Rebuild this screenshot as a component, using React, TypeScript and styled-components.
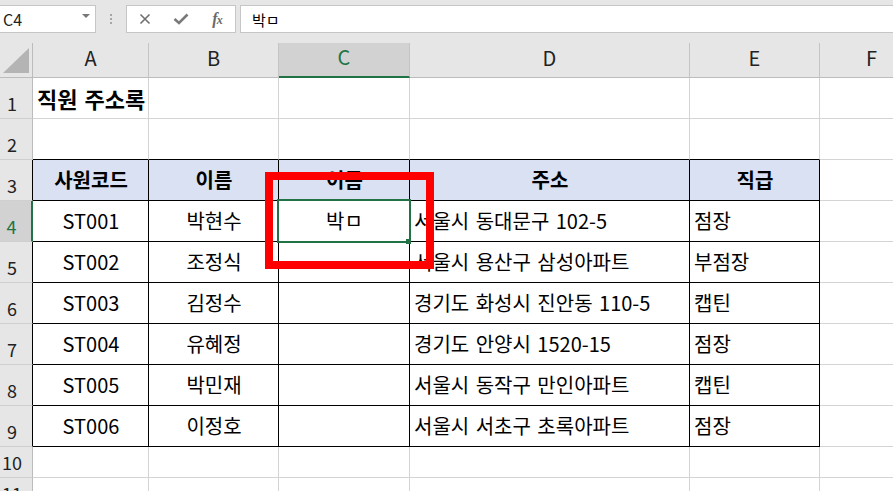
import React from 'react';
import styled, { createGlobalStyle, css } from 'styled-components';

const GlobalStyle = createGlobalStyle`
  html, body { margin: 0; padding: 0; background: #fff; }
  body { font-family: "Noto Sans CJK KR", "Noto Sans", sans-serif; overflow: hidden; }
`;

const Page = styled.div`
  position: relative;
  width: 893px;
  height: 491px;
  overflow: hidden;
  background: #fff;
`;

const TopBar = styled.div`
  height: 43px;
  box-sizing: border-box;
  padding-top: 5px;
  background: #e6e6e6;
  display: flex;
  align-items: flex-start;
`;

const NameBox = styled.div`
  width: 97px;
  height: 28px;
  margin-left: -1px;
  box-sizing: border-box;
  background: #fff;
  border: 1px solid #c6c6c6;
  display: flex;
  align-items: center;
  justify-content: space-between;
  padding: 0 5px 0 3px;
  font-size: 16px;
  color: #222;
`;

const DropArrow = styled.span`
  width: 0;
  height: 0;
  border-left: 4px solid transparent;
  border-right: 4px solid transparent;
  border-top: 4px solid #777;
  margin-top: -6px;
`;

const Dots = styled.div`
  margin: 9px 0 0 14px;
  display: flex;
  flex-direction: column;
  gap: 2px;
`;

const Dot = styled.span`
  width: 2px;
  height: 2px;
  background: #a6a6a6;
`;

const ButtonGroup = styled.div`
  margin-left: 14px;
  width: 110px;
  height: 28px;
  box-sizing: border-box;
  background: #fff;
  border: 1px solid #c6c6c6;
  display: flex;
  align-items: center;
`;

const IconSlot = styled.div`
  width: 36px;
  height: 100%;
  display: flex;
  align-items: center;
  justify-content: center;
`;

const Fx = styled.span`
  font-family: "Liberation Serif", "DejaVu Serif", serif;
  font-style: italic;
  font-weight: bold;
  font-size: 16px;
  color: #6a6a6a;
  letter-spacing: -1px;
`;

const FxSub = styled.span`
  font-size: 12px;
`;

const FormulaInput = styled.div`
  margin-left: 4px;
  margin-right: -2px;
  flex: 1;
  height: 28px;
  box-sizing: border-box;
  background: #fff;
  border: 1px solid #c6c6c6;
  padding-left: 11px;
  display: flex;
  align-items: center;
  font-size: 15px;
  color: #000;
`;

const Grid = styled.div`
  display: grid;
  grid-template-columns: 33px 116px 130px 131px 280px 130px 104px 100px;
  grid-template-rows: 35px repeat(9, 41px) 31px 31px;
`;

const Corner = styled.div`
  background: #e6e6e6;
  border-right: 1px solid #bcbcbc;
  border-bottom: 1px solid #bcbcbc;
  box-sizing: border-box;
  display: flex;
`;

const ColHeader = styled.div<{ $selected?: boolean }>`
  background: #e6e6e6;
  border-right: 1px solid #c4c4c4;
  border-bottom: 1px solid #bcbcbc;
  box-sizing: border-box;
  display: flex;
  align-items: center;
  justify-content: center;
  padding-bottom: 6px;
  font-size: 20px;
  color: #222;
  ${(p) =>
    p.$selected &&
    css`
      background: #d2d2d2;
      color: #217346;
      border-bottom: 2px solid #217346;
    `}
`;

const RowHeader = styled.div<{ $selected?: boolean; $edge?: boolean }>`
  background: #e6e6e6;
  border-right: 1px solid ${(p) => (p.$edge ? '#000' : '#bcbcbc')};
  border-bottom: 1px solid #cfcfcf;
  box-sizing: border-box;
  display: flex;
  align-items: flex-end;
  justify-content: center;
  padding: 0 8px 3px 0;
  font-size: 18px;
  line-height: 24px;
  color: #222;
  ${(p) =>
    p.$selected &&
    css`
      background: #d2d2d2;
      color: #217346;
      border-right: 2px solid #217346;
    `}
`;

const Cell = styled.div<{
  $align?: 'center' | 'left';
  $bold?: boolean;
  $size?: number;
  $fill?: string;
  $rb?: boolean;
  $bb?: boolean;
}>`
  box-sizing: border-box;
  border-right: 1px solid ${(p) => (p.$rb ? '#000' : '#d4d4d4')};
  border-bottom: 1px solid ${(p) => (p.$bb ? '#000' : '#d4d4d4')};
  background: ${(p) => p.$fill || '#fff'};
  display: flex;
  align-items: flex-end;
  justify-content: ${(p) => (p.$align === 'center' ? 'center' : 'flex-start')};
  padding: 0 3px 8px 4px;
  font-size: ${(p) => p.$size || 20}px;
  line-height: 24px;
  word-spacing: 2px;
  font-weight: ${(p) => (p.$bold ? 700 : 400)};
  color: #000;
  white-space: nowrap;
`;

const Selection = styled.div`
  position: absolute;
  left: 277px;
  top: 199px;
  width: 134px;
  height: 44px;
  box-sizing: border-box;
  border: 2px solid #217346;
  pointer-events: none;
`;

const FillHandle = styled.div`
  position: absolute;
  left: 406px;
  top: 239px;
  width: 5px;
  height: 5px;
  background: #217346;
`;

const RedBox = styled.div`
  position: absolute;
  left: 265px;
  top: 172px;
  width: 169px;
  height: 97px;
  box-sizing: border-box;
  border: 8px solid #ff0000;
  pointer-events: none;
`;

type CellDef = { text: string; align: 'center' | 'left'; bold?: boolean; size?: number };

const columns = ['A', 'B', 'C', 'D', 'E', 'F', ''];
const aligns: ('center' | 'left')[] = ['center', 'center', 'center', 'left', 'left'];

const tableRows: string[][] = [
  ['사원코드', '이름', '이름', '주소', '직급'],
  ['ST001', '박현수', '박ㅁ', '서울시 동대문구 102-5', '점장'],
  ['ST002', '조정식', '', '서울시 용산구 삼성아파트', '부점장'],
  ['ST003', '김정수', '', '경기도 화성시 진안동 110-5', '캡틴'],
  ['ST004', '유혜정', '', '경기도 안양시 1520-15', '점장'],
  ['ST005', '박민재', '', '서울시 동작구 만인아파트', '캡틴'],
  ['ST006', '이정호', '', '서울시 서초구 초록아파트', '점장'],
];

const XIcon = () => (
  <svg width="12" height="12" viewBox="0 0 12 12">
    <path d="M1.5 1.5 L10.5 10.5 M10.5 1.5 L1.5 10.5" stroke="#6f6f6f" strokeWidth="1.6" fill="none" />
  </svg>
);

const CheckIcon = () => (
  <svg width="16" height="12" viewBox="0 0 16 12">
    <path d="M1.5 6 L6 10 L14.5 1.5" stroke="#7a7a7a" strokeWidth="2.6" fill="none" />
  </svg>
);

const CornerTriangle = () => (
  <svg width="32" height="34" viewBox="0 0 32 34">
    <polygon points="29,5 29,30 3,30" fill="#b4b4b4" />
  </svg>
);

export default function App() {
  const rowNodes: React.ReactNode[] = [];
  for (let r = 1; r <= 11; r++) {
    const inTable = r >= 3 && r <= 9;
    rowNodes.push(
      <RowHeader key={`rh${r}`} $selected={r === 4} $edge={inTable}>
        {r}
      </RowHeader>
    );
    for (let c = 0; c < 7; c++) {
      let def: CellDef | null = null;
      if (r === 1 && c === 0) def = { text: '직원 주소록', align: 'left', bold: true, size: 22 };
      if (inTable && c < 5) {
        def = {
          text: tableRows[r - 3][c],
          align: r === 3 ? 'center' : aligns[c],
          bold: r === 3,
        };
      }
      const tableCol = c < 5;
      rowNodes.push(
        <Cell
          key={`c${r}-${c}`}
          $align={def ? def.align : 'left'}
          $bold={def?.bold}
          $size={def?.size}
          $fill={r === 3 && tableCol ? '#d9e1f2' : undefined}
          $rb={inTable && tableCol}
          $bb={(inTable || r === 2) && tableCol}
        >
          {def?.text}
        </Cell>
      );
    }
  }

  return (
    <Page>
      <GlobalStyle />
      <TopBar>
        <NameBox>
          C4
          <DropArrow />
        </NameBox>
        <Dots>
          <Dot />
          <Dot />
          <Dot />
        </Dots>
        <ButtonGroup>
          <IconSlot>
            <XIcon />
          </IconSlot>
          <IconSlot>
            <CheckIcon />
          </IconSlot>
          <IconSlot>
            <Fx>
              f<FxSub>x</FxSub>
            </Fx>
          </IconSlot>
        </ButtonGroup>
        <FormulaInput>박ㅁ</FormulaInput>
      </TopBar>
      <Grid>
        <Corner>
          <CornerTriangle />
        </Corner>
        {columns.map((col, i) => (
          <ColHeader key={`col${i}`} $selected={col === 'C'}>
            {col}
          </ColHeader>
        ))}
        {rowNodes}
      </Grid>
      <Selection />
      <FillHandle />
      <RedBox />
    </Page>
  );
}
